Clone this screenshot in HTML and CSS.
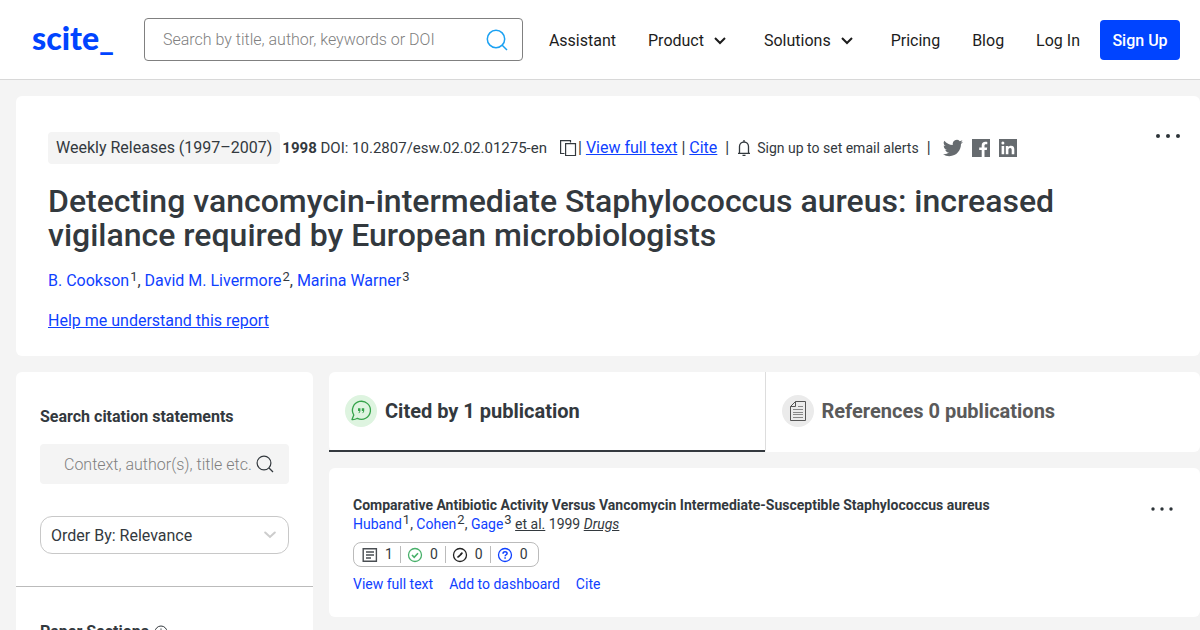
FILE: index.html
```html
<!DOCTYPE html>
<html lang="en">
<head>
<meta charset="utf-8">
<meta name="viewport" content="width=device-width, initial-scale=1">
<title>Detecting vancomycin-intermediate Staphylococcus aureus - scite</title>
<link rel="stylesheet" href="styles.css">
</head>
<body>
<header class="header">
  <a class="logo" href="#">scite_</a>
  <form class="search">
    <input class="search-input" type="search" aria-label="Search" placeholder="Search by title, author, keywords or DOI">
    <button class="icon-button search-button" type="button" aria-label="Submit search">
      <svg width="24" height="24" viewBox="0 0 24 24" fill="none" stroke="#1ba1f2" stroke-width="1.5"><circle cx="11" cy="11" r="8.7"/><path d="M17 17l5 5"/></svg>
    </button>
  </form>
  <nav class="nav">
    <a class="nav-link" href="#">Assistant</a>
    <button class="nav-link nav-menu" type="button">Product <svg width="12" height="8" viewBox="0 0 12 8" fill="none" stroke="#1c1c1c" stroke-width="2"><path d="M1 1l5 5 5-5"/></svg></button>
    <button class="nav-link nav-menu" type="button">Solutions <svg width="12" height="8" viewBox="0 0 12 8" fill="none" stroke="#1c1c1c" stroke-width="2"><path d="M1 1l5 5 5-5"/></svg></button>
    <a class="nav-link" href="#">Pricing</a>
    <a class="nav-link" href="#">Blog</a>
    <a class="nav-link" href="#">Log In</a>
  </nav>
  <button class="signup" type="button">Sign Up</button>
</header>

<main class="page">
  <section class="card hero">
    <div class="hero-body">
      <div class="meta">
        <span class="badge">Weekly Releases (1997–2007)</span>
        <span class="doi"><strong>1998</strong> DOI: 10.2807/esw.02.02.01275-en</span>
        <button class="icon-button copy" type="button" aria-label="Copy DOI">
          <svg width="18" height="18" viewBox="0 0 18 18" fill="none" stroke="#33393e" stroke-width="1.2"><path d="M5.500 14.500H1.600V1.600h9.900v2"/><path d="M6.600 4.600h9.900v11.900H6.600z"/></svg>
        </button>
        <span class="meta-links">| <a href="#">View full text</a> | <a href="#">Cite</a></span>
        <span class="bar">|</span>
        <button class="icon-button alerts" type="button">
          <svg width="14" height="18" viewBox="0 0 14 18" fill="none" stroke="#33393e" stroke-width="1.3"><path d="M1 14.300h12M2.500 14V7.500a4.500 4.500 0 0 1 9 0V14M7 1v2M5.500 16.300h3"/></svg>
          Sign up to set email alerts
        </button>
        <span class="bar">|</span>
        <span class="social">
          <a href="#" aria-label="Twitter"><svg width="20" height="20" viewBox="0 0 24 24" fill="#666b6f"><path d="M23.950 4.570a10 10 0 0 1-2.820.780 4.960 4.960 0 0 0 2.160-2.730c-.950.560-2 .960-3.130 1.190a4.920 4.920 0 0 0-8.380 4.480C7.690 8.100 4.070 6.130 1.640 3.160a4.920 4.920 0 0 0 1.520 6.570 4.900 4.900 0 0 1-2.230-.610v.060a4.920 4.920 0 0 0 3.950 4.830 5 5 0 0 1-2.210.080 4.940 4.940 0 0 0 4.600 3.420A9.870 9.870 0 0 1 0 19.540a14 14 0 0 0 7.550 2.210c9.050 0 14-7.500 14-13.980 0-.210 0-.420-.020-.630a9.940 9.940 0 0 0 2.420-2.570z"/></svg></a>
          <a href="#" aria-label="Facebook"><svg width="18" height="18" viewBox="0 0 18 18"><path fill="#666b6f" d="M0 0h18v18h-5.500v-6.900h2.300l.400-2.700h-2.700V6.700c0-.800.400-1.400 1.500-1.400h1.300V3c-.400-.100-1.100-.200-1.900-.200-2.300 0-3.700 1.300-3.700 3.600v2H7.200v2.700h2.500V18H0z"/></svg></a>
          <a href="#" aria-label="LinkedIn"><svg width="18" height="18" viewBox="0 0 18 18"><path fill="#666b6f" d="M0 0h18v18H0z"/><path fill="#fff" d="M2.600 6.900h2.600v8.400H2.600zM6.800 6.900h2.500v1.200c.500-.800 1.400-1.400 2.700-1.400 2.700 0 3.300 1.600 3.300 4v4.600h-2.600v-4.100c0-1.100-.200-2.200-1.600-2.200s-1.700 1.100-1.700 2.200v4.100H6.800z"/><circle cx="3.900" cy="4.100" r="1.500" fill="#fff"/></svg></a>
        </span>
      </div>
      <h1 class="title">Detecting vancomycin-intermediate Staphylococcus aureus: increased vigilance required by European microbiologists</h1>
      <p class="authors"><a href="#">B. Cookson</a><sup>1</sup>, <a href="#">David M. Livermore</a><sup>2</sup>, <a href="#">Marina Warner</a><sup>3</sup></p>
      <a class="help" href="#">Help me understand this report</a>
    </div>
    <button class="icon-button more" type="button" aria-label="More actions">
      <svg width="26" height="6" viewBox="0 0 26 6" fill="#2c3338"><circle cx="3" cy="3" r="2"/><circle cx="13" cy="3" r="2"/><circle cx="23" cy="3" r="2"/></svg>
    </button>
  </section>

  <div class="columns">
    <aside class="card sidebar">
      <section class="filter">
        <label class="filter-title" for="statement-search">Search citation statements</label>
        <div class="field">
          <input id="statement-search" class="field-input" type="text" placeholder="Context, author(s), title etc.">
          <svg width="18" height="18" viewBox="0 0 18 18" fill="none" stroke="#33393e" stroke-width="1.2"><circle cx="8" cy="8" r="6.900"/><path d="M13 13l4 4"/></svg>
        </div>
        <div class="order">
          <select class="order-select" aria-label="Order results">
            <option>Order By: Relevance</option>
            <option>Order By: Newest First</option>
            <option>Order By: Oldest First</option>
          </select>
          <svg class="order-arrow" width="12" height="8" viewBox="0 0 12 8" fill="none" stroke="#ccc" stroke-width="2" stroke-linecap="round"><path d="M1.200 1.500L6 6l4.800-4.500"/></svg>
        </div>
      </section>
      <section class="filter">
        <h2 class="filter-title">Paper Sections
          <svg width="14" height="14" viewBox="0 0 14 14" fill="none" stroke="#33393e"><circle cx="7" cy="7" r="6"/><path d="M7 6v4.500M7 3.500v1.300"/></svg>
        </h2>
      </section>
    </aside>

    <div class="results">
      <div class="card tabs" role="tablist">
        <button class="tab tab-active" type="button" role="tab" aria-selected="true">
          <svg width="32" height="32" viewBox="0 0 32 32"><circle cx="16" cy="16" r="16" fill="#def4e0"/><path fill="none" stroke="#35a34a" stroke-width="1.300" stroke-linejoin="round" d="M7 24.600L8.800 20A9 9 0 1 1 12.400 23.300Q10 24.800 7 24.600z"/><path fill="#35a34a" d="M13 13.200h2.400v2.300c0 1.400-.5 2.300-1.600 2.800l-.3-.6c.6-.4.9-.9.9-1.600H13zM16.800 13.200h2.400v2.300c0 1.400-.5 2.300-1.600 2.800l-.3-.6c.6-.4.9-.9.9-1.600h-1.400z"/></svg>
          Cited by 1 publication
        </button>
        <button class="tab" type="button" role="tab" aria-selected="false">
          <svg width="32" height="32" viewBox="0 0 32 32"><circle cx="16" cy="16" r="16" fill="#ebebeb"/><g fill="none" stroke="#555"><path d="M13.500 6.500h10v19h-15v-14zM13.500 6.500v5h-5"/><path stroke="#888" d="M16 11.500h5M11 14.500h10M11 17.500h10M11 19.500h10M11 22.500h10"/></g></svg>
          References 0 publications
        </button>
      </div>

      <article class="card paper">
        <div class="paper-body">
          <h3 class="paper-title">Comparative Antibiotic Activity Versus Vancomycin Intermediate-Susceptible Staphylococcus aureus</h3>
          <p class="paper-authors"><a href="#">Huband</a><sup>1</sup>, <a href="#">Cohen</a><sup>2</sup>, <a href="#">Gage</a><sup>3</sup> <u>et al.</u> 1999 <em>Drugs</em></p>
          <div class="tally">
            <span class="count"><svg width="16" height="16" viewBox="0 0 16 16" fill="none" stroke="#4a4f53" stroke-width="1.400"><path d="M1.200 1.700h13.200v12.600H1.200zM4 5h8M4 8h8M4 11h5"/></svg>1</span>
            <span class="count"><svg width="16" height="16" viewBox="0 0 16 16" fill="none" stroke="#48b06a" stroke-width="1.300"><circle cx="8" cy="8" r="6.500"/><path d="M5 8l2.200 2.300L11 6.200" stroke-width="1.600"/></svg>0</span>
            <span class="count"><svg width="16" height="16" viewBox="0 0 16 16" fill="none" stroke="#222" stroke-width="1.300"><circle cx="8" cy="8" r="6.500"/><path d="M5.400 10.300l2-1.300M8.500 7.400l2-1.700M6.500 9.600l3.300-3" stroke-width="1.600"/></svg>0</span>
            <span class="count"><svg width="16" height="16" viewBox="0 0 16 16" fill="none" stroke="#0f41ff" stroke-width="1.300"><circle cx="8" cy="8" r="6.500"/><path d="M6 6.700c0-2.600 4.100-2.500 4.100-.300 0 1.400-2 1.300-2 2.900M8.100 10.300v1.500" stroke-width="1.500"/></svg>0</span>
          </div>
          <div class="actions"><a href="#">View full text</a><a href="#">Add to dashboard</a><a href="#">Cite</a></div>
        </div>
        <button class="icon-button more" type="button" aria-label="More actions">
          <svg width="22" height="6" viewBox="0 0 22 6" fill="#2c3338"><circle cx="2" cy="3" r="1.700"/><circle cx="11" cy="3" r="1.700"/><circle cx="20" cy="3" r="1.700"/></svg>
        </button>
      </article>
    </div>
  </div>
</main>
</body>
</html>
```

FILE: styles.css
```css
* { box-sizing: border-box; }

body {
  margin: 0;
  background: #f4f4f4;
  color: #33393e;
  font: 16px/24px Roboto, "Liberation Sans", sans-serif;
}

a { color: #0f41ff; text-decoration: none; }
button, input, select { font: inherit; color: inherit; }
button { cursor: pointer; }
svg { display: block; flex: none; }
h1, h2, h3, p { margin: 0; }
sup { font-size: 13px; line-height: 0; vertical-align: 5px; margin-left: 1px; }

.icon-button { display: flex; align-items: center; padding: 0; border: 0; background: none; }
.card { background: #fff; border-radius: 6px; }

.header {
  display: flex;
  align-items: center;
  height: 80px;
  padding: 0 20px 0 32px;
  background: #fff;
  border-bottom: 1px solid #d8d8d8;
}
.logo {
  width: 80px;
  margin-right: 32px;
  padding-bottom: 4px;
  color: #0044ff;
  font: 900 32px/36px Lato, sans-serif;
}
.search {
  display: flex;
  align-items: center;
  flex: 0 1 379px;
  height: 43px;
  padding: 0 13px 0 18px;
  border: 1px solid #808080;
  border-radius: 4px;
}
.search-input {
  flex: 1;
  min-width: 0;
  padding: 0;
  border: 0;
  outline: 0;
  background: none;
  font-weight: 300;
}
.search-input::placeholder, .field-input::placeholder { color: #808080; opacity: 1; }
.nav { display: flex; align-items: center; gap: 32px; margin-left: auto; }
.nav-link { padding: 2px 0 0; border: 0; background: none; color: #1c1c1c; white-space: nowrap; }
.nav-menu { display: flex; align-items: center; gap: 10px; margin-right: 6px; }
.signup {
  min-width: 80px;
  height: 40px;
  margin-left: 20px;
  padding: 2px 12px 0;
  border: 0;
  border-radius: 4px;
  background: #0044ff;
  color: #fff;
  font-weight: 500;
  white-space: nowrap;
}

.page { padding: 16px 0 0 16px; }

.hero { display: flex; align-items: flex-start; padding: 36px 19px 23px 32px; }
.hero-body { flex: 1; }
.meta { display: flex; align-items: center; flex-wrap: wrap; }
.badge { padding: 4px 8px; border-radius: 4px; background: #f4f4f4; }
.doi { margin-left: 2px; font-size: 15px; }
.copy { margin-left: 12px; }
.meta-links { margin-left: 1px; }
.meta-links a, .help { text-decoration: underline; }
.bar { margin-left: 8px; }
.alerts { gap: 6px; margin-left: 8px; font-size: 14px; }
.social { display: flex; align-items: center; gap: 9px; margin-left: 12px; }
.title { margin-top: 20px; font-size: 32px; line-height: 34px; font-weight: 500; }
.authors { margin: 17px 0 16px; }
.more { padding: 1px 0; }

.columns { display: grid; grid-template-columns: 297px 1fr; gap: 16px; margin-top: 16px; }

.filter { padding: 33px 24px 32px; }
.filter + .filter { border-top: 1px solid #bbb; }
.filter-title { display: flex; align-items: center; gap: 5px; font-size: 16px; line-height: 24px; font-weight: 700; }
.field {
  display: flex;
  align-items: center;
  height: 40px;
  margin-top: 15px;
  padding: 0 15px 0 24px;
  border-radius: 4px;
  background: #f4f4f4;
}
.field-input { flex: 1; min-width: 0; padding: 1px 0 0; border: 0; outline: 0; background: none; font-weight: 300; }
.order { position: relative; margin-top: 32px; }
.order-select {
  display: block;
  width: 100%;
  height: 38px;
  padding: 2px 10px 0;
  border: 1px solid #c8c8c8;
  border-radius: 12px;
  background: #fff;
  appearance: none;
}
.order-arrow { position: absolute; top: 15px; right: 13px; pointer-events: none; }

.tabs { display: grid; grid-template-columns: 1fr 1fr; }
.tab {
  display: flex;
  align-items: center;
  gap: 8px;
  height: 80px;
  padding: 0 16px;
  border: 0;
  border-left: 1px solid #ddd;
  border-bottom: 2px solid transparent;
  background: none;
  color: #5a5a5a;
  font-size: 20px;
  font-weight: 700;
}
.tab-active { border-left: 0; border-bottom-color: #33393e; color: #33393e; }

.paper { display: flex; align-items: flex-start; margin-top: 16px; padding: 27px 27px 23px 24px; }
.paper-body { flex: 1; }
.paper-title { font-size: 14px; line-height: 20px; font-weight: 700; }
.paper-authors { font-size: 14px; line-height: 18px; }
.paper-authors em { text-decoration: underline; }
.tally {
  display: flex;
  align-items: center;
  width: fit-content;
  height: 25px;
  margin-top: 9px;
  padding: 0 10px 0 8px;
  border: 1px solid #bbb;
  border-radius: 8px;
  font-size: 14px;
}
.count { display: flex; align-items: center; gap: 7px; line-height: 17px; }
.count + .count { margin-left: 7px; padding-left: 6px; border-left: 1px solid #bbb; }
.actions { display: flex; gap: 16px; margin-top: 7px; font-size: 14px; line-height: 20px; }
.paper .more { margin-top: 10px; }
```
